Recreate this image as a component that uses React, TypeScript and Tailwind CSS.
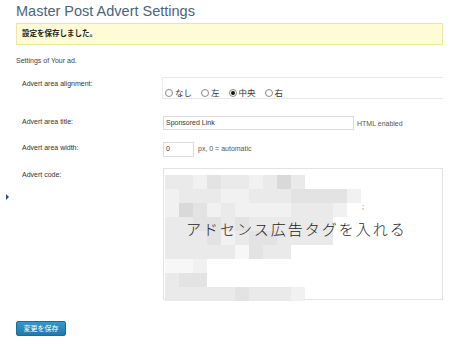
import React from 'react';

const shade: Record<string, string> = {
  '.': 'bg-transparent',
  w: 'bg-[#f7f7f7]',
  a: 'bg-[#f1f1f1]',
  b: 'bg-[#eaeaea]',
  c: 'bg-[#e3e3e3]',
  d: 'bg-[#d9d9d9]',
};

// blurred-out code, one string per mosaic row
const mosaic = [
  'bbacbbabdb',
  'abbbaabbbcccca',
  'adcabaaaabbba',
  'bbccbcbbbbbb',
  'bbbcabccbbbb',
  'bbbbbwcbb',
  'wwa',
  'bcc',
  'bbbbbcbbba',
];

const Radio = ({ label, checked = false }: { label: string; checked?: boolean }) => (
  <label className="flex items-center gap-[2px] mr-[9px]">
    <span className="w-[8px] h-[8px] rounded-full border border-[#8a8a8a] bg-white flex items-center justify-center">
      {checked && <span className="w-[4px] h-[4px] rounded-full bg-[#111]" />}
    </span>
    <span>{label}</span>
  </label>
);

const Row = ({ label, children, className = '', labelPad = '' }: { label: string; children: React.ReactNode; className?: string; labelPad?: string }) => (
  <div className={`flex ${className}`}>
    <div className={`w-[147px] shrink-0 pl-[6px] text-[7px] leading-[9px] text-[#333] ${labelPad}`}>{label}</div>
    <div className="flex-1 min-w-0">{children}</div>
  </div>
);

export default function App() {
  return (
    <div className="relative w-[454px] h-[344px] overflow-hidden bg-white font-['Liberation_Sans','Noto_Sans_CJK_JP',sans-serif] text-[#333]">
      <div className="pl-4 pr-[11px]">
        <h1 className="pt-[2px] text-[14.5px] leading-[18px] text-[#4a657c]">Master Post Advert Settings</h1>

        <div className="mt-[3px] h-[22px] border border-[#ebe6a6] bg-[#fdfcd6] pl-[5px] flex items-center text-[7.5px] font-bold text-[#222]">
          設定を保存しました。
        </div>

        <p className="mt-[11px] text-[7px] leading-[9px] text-[#444]">Settings of Your ad.</p>

        <Row label="Advert area alignment:" className="mt-[12px]" labelPad="pt-[2px]">
          <div className="-ml-[1px] h-[22px] border border-r-0 border-[#e9e9e9] pt-[10px] pl-[2px] flex text-[8.5px] leading-[9px] text-[#333]">
            <Radio label="なし" />
            <Radio label="左" />
            <Radio label="中央" checked />
            <Radio label="右" />
          </div>
        </Row>

        <Row label="Advert area title:" className="mt-[17px] items-start" labelPad="pt-[1px]">
          <div className="flex items-center">
            <div className="w-[191px] h-[14px] border border-[#dcdcdc] bg-white pl-[2px] flex items-center text-[7px]">Sponsored Link</div>
            <span className="ml-[3px] mt-[2px] text-[7px] text-[#555]">HTML enabled</span>
          </div>
        </Row>

        <Row label="Advert area width:" className="mt-[12px]" labelPad="pt-[1px]">
          <div className="flex items-center">
            <div className="w-[31px] h-[15px] border border-[#dcdcdc] bg-white pl-[2px] flex items-center text-[7px]">0</div>
            <span className="ml-[4px] text-[7px] text-[#555]">px, 0 = automatic</span>
          </div>
        </Row>

        <Row label="Advert code:" className="mt-[11px]" labelPad="pt-[2px]">
          <div className="relative h-[132px] border border-[#e3e3e3] bg-white pt-[6px] pl-[1px]">
            {mosaic.map((row, i) => (
              <div key={i} className="flex h-[14px] last:h-[11px]">
                {row.split('').map((c, j) => (
                  <div key={j} className={`w-[14px] h-full ${shade[c]}`} />
                ))}
              </div>
            ))}
            <span className="absolute left-[198px] top-[33px] text-[7px] text-[#555]">;</span>
            <div className="absolute left-[22px] top-[50px] font-['Noto_Sans_CJK_JP',sans-serif] font-light text-[15px] leading-[20px] tracking-[2px] text-[#1e1e1e]">
              アドセンス広告タグを入れる
            </div>
          </div>
        </Row>

        <button className="mt-[21px] w-[50px] h-[15px] rounded-[2px] border border-[#1d6d9a] bg-gradient-to-b from-[#3199cc] to-[#2378a8] text-white text-[7px] leading-[13px]">
          変更を保存
        </button>
      </div>

      <div className="absolute left-[6px] top-[194px] w-0 h-0 border-y-[3px] border-y-transparent border-l-[3px] border-l-[#2e4f7e]" />
    </div>
  );
}
